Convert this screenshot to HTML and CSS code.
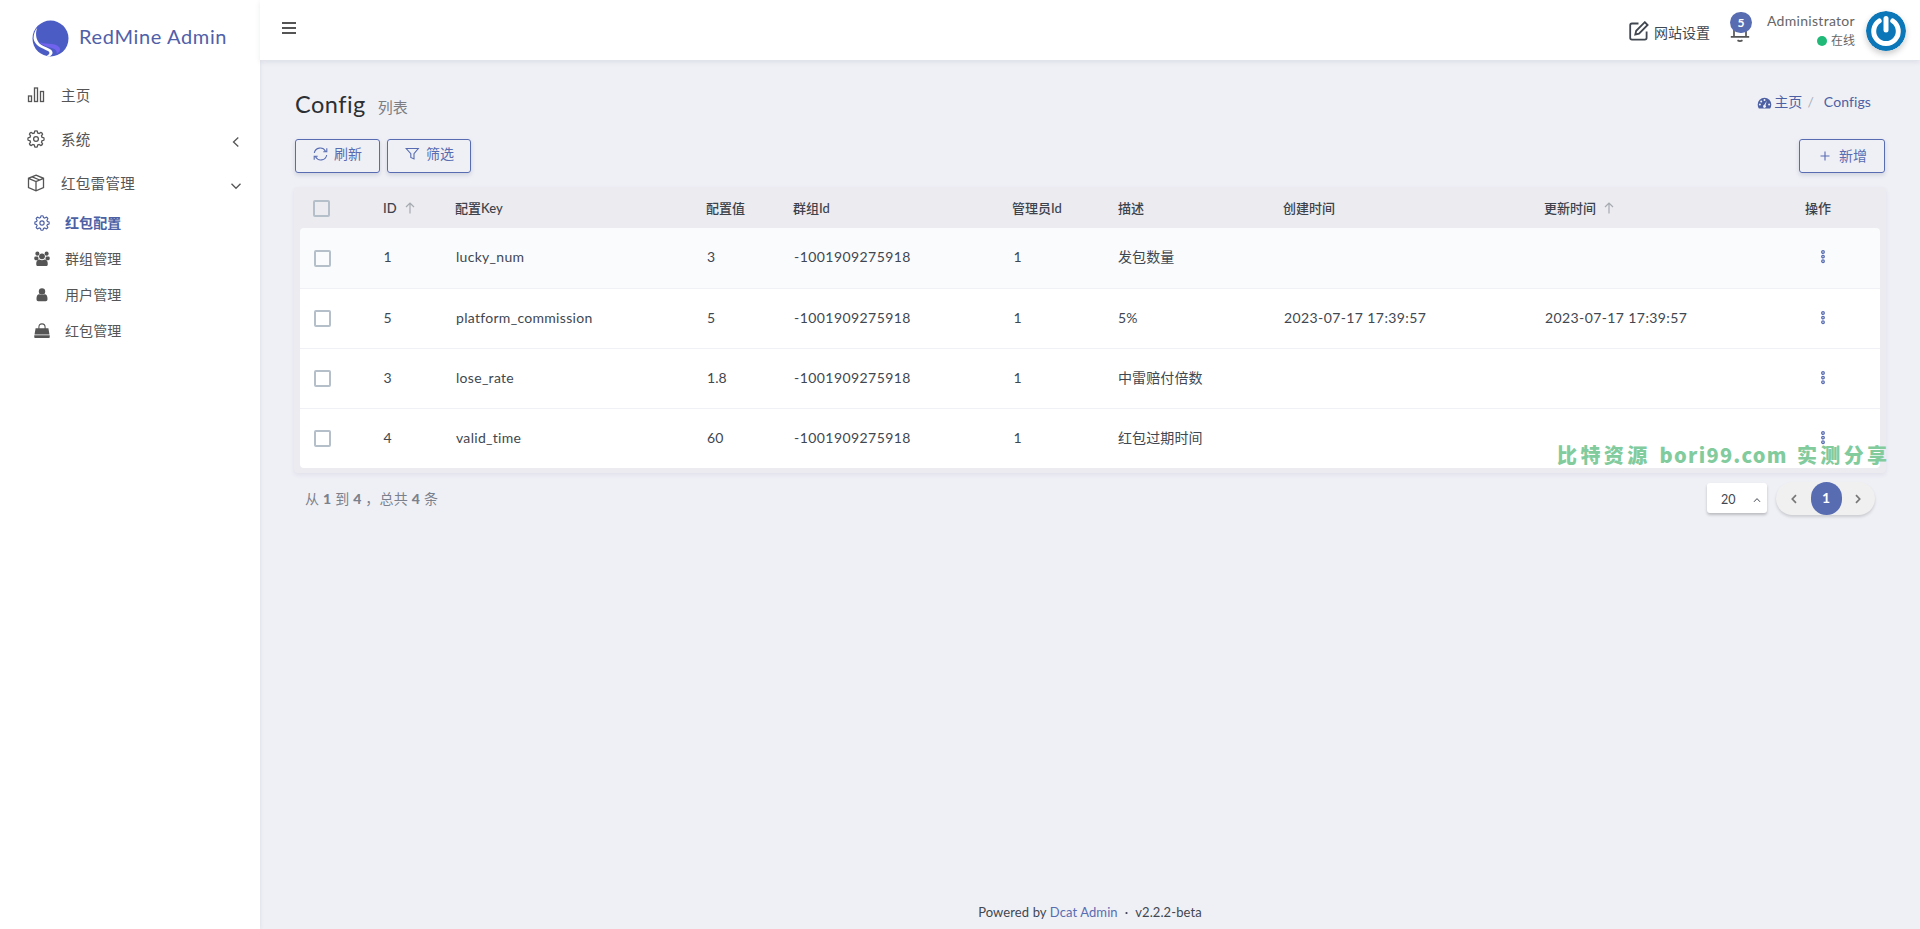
FILE: index.html
```html
<!DOCTYPE html>
<html lang="zh-CN">
<head>
<meta charset="utf-8">
<title>RedMine Admin</title>
<link rel="stylesheet" href="styles.css">
</head>
<body>
<svg class="defs" width="0" height="0" aria-hidden="true">
  <symbol id="gear" viewBox="0 0 24 24"><path d="M9.8 3.9 10.3 1.6Q12 .8 13.7 1.6L14.2 3.9 16.2 4.7 18.4 3.2Q20.2 3.8 20.8 5.6L19.3 7.8 20.1 9.8 22.4 10.3Q23.2 12 22.4 13.7L20.1 14.2 19.3 16.2 20.8 18.4Q20.2 20.2 18.4 20.8L16.2 19.3 14.2 20.1 13.7 22.4Q12 23.2 10.3 22.4L9.8 20.1 7.8 19.3 5.6 20.8Q3.8 20.2 3.2 18.4L4.7 16.2 3.9 14.2 1.6 13.7Q.8 12 1.6 10.3L3.9 9.8 4.7 7.8 3.2 5.6Q3.8 3.8 5.6 3.2L7.8 4.7Z"/><circle cx="12" cy="12" r="3.2"/></symbol>
  <symbol id="dots" viewBox="0 0 6 16"><circle cx="3" cy="3" r="1.300"/><circle cx="3" cy="7.600" r="1.300"/><circle cx="3" cy="12.200" r="1.300"/></symbol>
  <symbol id="up" viewBox="0 0 10 12"><path d="M5 11.5V1.2M1 5 5 1l4 4"/></symbol>
</svg>
<div class="app">
  <aside class="sidebar">
    <a class="brand">
      <svg class="logo" viewBox="0 0 36 36"><circle cx="18" cy="18" r="17.5" fill="#4b5cc4"/><path d="M5.2 7.500C3.200 12 3.500 18 7 22.500c4.500 4.500 13.500 4.500 13 9.700-.2 1.500-1.500 2.700-2.700 3.200-1.500 0-2.500-.5-3-.8 2.700-1 3.700-3 1.200-4.500C10 27.500 2.500 25 1.500 18 1.500 13.500 3 10 5.200 7.500Z" fill="#fff"/><path d="M6 21c5 3.500 16 .5 20.500 5.500 2 3 0 5-2.500 6.300.5-3-1.500-4.800-5.500-5.800-5-1.300-9-2.500-12.500-6Z" fill="#7163ee"/></svg>
      <span>RedMine Admin</span>
    </a>
    <nav class="menu">
      <a class="item"><svg class="ic" viewBox="0 0 18 18"><rect x="1.500" y="10" width="3" height="5.500"/><rect x="7.500" y="2" width="3" height="13.500"/><rect x="13.500" y="5.500" width="3" height="10"/></svg><span>主页</span></a>
      <a class="item"><svg class="ic gear"><use href="#gear"/></svg><span>系统</span><svg class="arrow left" viewBox="0 0 10 10"><path d="M7.300 .5 2.500 5l4.800 4.500"/></svg></a>
      <a class="item"><svg class="ic" viewBox="0 0 18 18"><path d="M9 1.200 16.500 4.300V13.500L9 16.800 1.500 13.500V4.300ZM1.500 4.300 9 7.600 16.500 4.300M9 7.600V16.800M5.200 2.800 12.700 6"/></svg><span>红包雷管理</span><svg class="arrow" viewBox="0 0 10 10"><path d="M.5 2.800 5 7.300 9.500 2.800"/></svg></a>
      <div class="submenu">
        <a class="sub active"><svg class="ic gear"><use href="#gear"/></svg><span>红包配置</span></a>
        <a class="sub"><svg class="ic solid" viewBox="0 0 18 18"><circle cx="3.800" cy="3" r="2.300"/><circle cx="14.200" cy="3" r="2.300"/><rect x=".3" y="6.300" width="4.700" height="4" rx="1.500"/><rect x="13" y="6.300" width="4.700" height="4" rx="1.500"/><circle cx="9" cy="6" r="3.300"/><path d="M2.500 14.500c0-3 1.200-4.800 3.500-4.800q3 1.400 6 0c2.300 0 3.500 1.800 3.500 4.800 0 1.800-.8 2.500-2.200 2.500H4.700c-1.400 0-2.200-.7-2.200-2.500Z"/></svg><span>群组管理</span></a>
        <a class="sub"><svg class="ic solid" viewBox="0 0 18 18"><circle cx="9" cy="5" r="3.600"/><path d="M2.800 13.500c0-3 1-5.300 3.200-5.300q3 1.800 6 0c2.200 0 3.200 2.300 3.200 5.300 0 1.800-.8 2.500-2 2.500H4.800c-1.200 0-2-.7-2-2.500Z"/></svg><span>用户管理</span></a>
        <a class="sub"><svg class="ic solid" viewBox="0 0 18 18"><path d="M1.800 5.800h14.400l1.200 7.200H.6ZM.3 13.900h17.400v2q0 .9-.9.900H1.200q-.9 0-.9-.9Z"/><path class="line" d="M5.500 8V4.900q0-3.900 3.500-3.900t3.500 3.900V8"/></svg><span>红包管理</span></a>
      </div>
    </nav>
  </aside>
  <div class="main">
    <header class="topbar">
      <svg class="burger" viewBox="0 0 16 12"><path d="M1 1h14M1 6h14M1 11h14"/></svg>
      <div class="tools">
        <a class="setting"><svg viewBox="0 0 20 20"><path d="M9.500 2.500H3Q1.200 2.500 1.200 4.300V16.800Q1.200 18.600 3 18.600H15.800Q17.600 18.600 17.600 16.800V10.500M15.800 1.200 18.600 4 10 12.600 6.300 13.600 7.200 9.800Z"/></svg><span>网站设置</span></a>
        <a class="bell"><svg viewBox="0 0 20 22"><path d="M4 17V8q0-6 6-6t6 6v9M.8 16.800H19.200M7.500 20.200Q10 22 12.500 20.200"/></svg><b>5</b></a>
        <div class="user"><span class="name">Administrator</span><span class="status"><i></i>在线</span></div>
        <svg class="avatar" viewBox="0 0 40 40"><circle cx="20" cy="20" r="20" fill="#0b76b8"/><path d="M13.200 10A12.300 12.300 0 1 0 26.800 10" fill="none" stroke="#fff" stroke-width="5" stroke-linecap="round"/><path d="M20 7.500v11.500" stroke="#fff" stroke-width="5" stroke-linecap="round"/></svg>
      </div>
    </header>
    <section class="content">
      <div class="heading">
        <h1>Config<small>列表</small></h1>
        <div class="crumbs"><svg viewBox="0 0 14 12"><path d="M7 .8A6.800 6.800 0 0 0 .2 7.600Q.2 10 1.400 11.500H12.600Q13.800 10 13.800 7.600A6.800 6.800 0 0 0 7 .8Z"/><g fill="#eff0f6"><circle cx="7" cy="3" r="1"/><circle cx="3.700" cy="4.400" r="1"/><circle cx="2.400" cy="7.600" r="1"/><circle cx="11.600" cy="7.600" r="1"/><path d="M9.300 3.700 8 8.200a1.500 1.500 0 1 1-1.400-.3Z"/></g></svg><span>主页</span><i>/</i><span class="last">Configs</span></div>
      </div>
      <div class="actions">
        <a class="btn refresh"><svg viewBox="0 0 15 14"><path d="M1.300 6A6 6 0 0 1 12.500 4.200M13.700 8A6 6 0 0 1 2.500 9.800M13.800 1.200V4.700H10.300M1.200 12.800V9.300H4.700"/></svg>刷新</a>
        <a class="btn filter"><svg viewBox="0 0 15 14"><path d="M1.200 1.500H13.300L9 6.600V12L5.800 10.500V6.600Z"/></svg>筛选</a>
        <a class="btn add"><svg viewBox="0 0 10 10"><path d="M5 .5v9M.5 5h9"/></svg>新增</a>
      </div>
      <div class="card">
        <table>
          <colgroup><col class="c1"><col class="c2"><col class="c3"><col class="c4"><col class="c5"><col class="c6"><col class="c7"><col class="c8"><col class="c9"><col class="c10"></colgroup>
          <thead><tr><th><i class="check"></i></th><th>ID<svg><use href="#up"/></svg></th><th>配置Key</th><th>配置值</th><th>群组Id</th><th>管理员Id</th><th>描述</th><th>创建时间</th><th>更新时间<svg><use href="#up"/></svg></th><th>操作</th></tr></thead>
          <tbody>
            <tr class="hover"><td><i class="check"></i></td><td>1</td><td>lucky_num</td><td>3</td><td class="num">-1001909275918</td><td>1</td><td>发包数量</td><td></td><td></td><td><svg class="dots"><use href="#dots"/></svg></td></tr>
            <tr><td><i class="check"></i></td><td>5</td><td>platform_commission</td><td>5</td><td class="num">-1001909275918</td><td>1</td><td>5%</td><td class="date">2023-07-17 17:39:57</td><td class="date">2023-07-17 17:39:57</td><td><svg class="dots"><use href="#dots"/></svg></td></tr>
            <tr><td><i class="check"></i></td><td>3</td><td>lose_rate</td><td>1.8</td><td class="num">-1001909275918</td><td>1</td><td>中雷赔付倍数</td><td></td><td></td><td><svg class="dots"><use href="#dots"/></svg></td></tr>
            <tr><td><i class="check"></i></td><td>4</td><td>valid_time</td><td>60</td><td class="num">-1001909275918</td><td>1</td><td>红包过期时间</td><td></td><td></td><td><svg class="dots"><use href="#dots"/></svg></td></tr>
          </tbody>
        </table>
        <div class="watermark"><span>比特资源</span><span class="site">bori99.com</span><span>实测分享</span></div>
      </div>
      <div class="pager">
        <div class="total">从 <b>1</b> 到 <b>4</b> ，总共 <b>4</b> 条</div>
        <div class="size"><span>20</span><svg viewBox="0 0 8 6"><path d="M1 4.800 4 1.600 7 4.800"/></svg></div>
        <div class="pages"><svg viewBox="0 0 6 10"><path d="M5 1.200 1.300 5 5 8.800"/></svg><b>1</b><svg viewBox="0 0 6 10"><path d="M1 1.200 4.700 5 1 8.800"/></svg></div>
      </div>
    </section>
    <footer>Powered by <a>Dcat Admin</a><span class="sep">·</span>v2.2.2-beta</footer>
  </div>
</div>
</body>
</html>
```
FILE: styles.css
```css
* { box-sizing: border-box; }
body { margin: 0; background: #eff0f6; color: #414750; font: 14px/20px Lato, "Noto Sans CJK SC", sans-serif; }
svg { fill: none; stroke: currentColor; flex: none; display: block; }
i { font-style: normal; }
.defs { position: absolute; }
.app { display: flex; height: 929px; overflow: hidden; }

.sidebar { width: 260px; background: #fff; box-shadow: 0 0 4px rgba(60, 70, 100, .12); color: #555; }
.brand { display: flex; align-items: center; height: 77px; padding-left: 32px; gap: 10px; color: #5060a8; font-size: 20px; letter-spacing: .64px; }
.brand span { padding-bottom: 5px; }
.logo { width: 37px; height: 37px; stroke: none; }
.item { display: flex; align-items: center; height: 44px; padding: 0 19px 0 27px; font-size: 14.5px; }
.menu { margin-top: -4px; }
.ic { width: 18px; height: 18px; stroke-width: 1.3; }
.gear { stroke-width: 1.7; }
.item span { padding: 2px 0 0 16px; letter-spacing: .3px; flex: 1; }
.arrow { width: 10px; height: 10px; margin-top: 5px; stroke-width: 1.3; }
.sub { display: flex; align-items: center; height: 36px; padding-left: 34px; font-size: 14px; }
.sub .ic { width: 16px; height: 16px; }
.sub span { padding-left: 15px; letter-spacing: .1px; }
.sub.active { color: #4c60a3; font-weight: bold; }
.solid { fill: currentColor; stroke: none; }
.solid .line { fill: none; stroke: currentColor; stroke-width: 1.2; }

.main { flex: 1; display: flex; flex-direction: column; }
.topbar { height: 60px; background: #fff; box-shadow: 0 2px 5px rgba(60, 70, 100, .1); display: flex; align-items: flex-start; padding-left: 21px; }
.burger { width: 16px; height: 12px; margin-top: 22px; stroke-width: 2; color: #555; }
.tools { margin-left: auto; display: flex; }
.setting { display: flex; gap: 5px; padding-top: 21px; color: #414750; }
.setting svg { width: 20px; height: 20px; stroke-width: 1.8; }
.setting span { padding-top: 2px; }
.bell { position: relative; margin: 20px 0 0 20px; width: 20px; }
.bell svg { width: 20px; height: 22px; color: #555; stroke-width: 1.7; }
.bell b { position: absolute; left: 0; top: -8px; width: 22px; height: 21px; border-radius: 11px; background: #586cb1; color: #fff; text-align: center; font-size: 12px; line-height: 21px; }
.user { display: flex; flex-direction: column; align-items: flex-end; width: 105px; padding-top: 11px; color: #666; }
.name { font-size: 14px; letter-spacing: .3px; }
.status { display: flex; align-items: center; gap: 4px; font-size: 12px; line-height: 19px; }
.status i { width: 10px; height: 10px; border-radius: 5px; background: #21b978; }
.avatar { width: 40px; height: 40px; margin: 11px 14px 0 11px; stroke: none; border-radius: 50%; box-shadow: 0 3px 6px rgba(0, 0, 0, .2); }

.content { flex: 1; padding: 29px 34px 0 34px; }
.heading { display: flex; height: 50px; padding-left: 1px; justify-content: space-between; }
h1 { margin: 0; font-size: 23.5px; line-height: 30px; font-weight: 400; color: #2c2f33; letter-spacing: .5px; }
small { font-size: 15px; margin-left: 12px; color: #7b7d82; letter-spacing: 0; }
.crumbs { display: flex; color: #4c60a3; padding-right: 15px; padding-top: 3px; letter-spacing: .1px; }
.crumbs svg { width: 15px; height: 12px; margin: 5px 2px 0 0; fill: #4c60a3; stroke: none; }
.crumbs i { color: #aab0bb; margin: 0 10px 0 5px; }
.actions { display: flex; gap: 7px; padding-left: 1px; }
.btn { height: 34px; display: flex; align-items: center; border: 1px solid #586cb1; border-radius: 3px; color: #586cb1; box-shadow: 0 2px 4px rgba(60, 70, 110, .18); padding-left: 17px; }
.btn svg { width: 15px; height: 14px; margin-right: 6px; stroke-width: 1.1; }
.refresh { width: 85px; padding-bottom: 4px; }
.filter { width: 84px; padding-bottom: 4px; }
.add { width: 86px; margin: 0 1px 0 auto; padding-left: 20px; }
.add svg { width: 10px; height: 10px; margin-right: 9px; }

.card { position: relative; margin-top: 14px; height: 286px; background: #ebebf0; border-radius: 4px; padding: 0 6px; box-shadow: 0 2px 4px rgba(60, 70, 100, .08); }
table { width: 100%; table-layout: fixed; border-collapse: separate; border-spacing: 0; }
.c1 { width: 67px; } .c2 { width: 73px; } .c3 { width: 251px; } .c4 { width: 87px; } .c5 { width: 219px; }
.c6 { width: 106px; } .c7 { width: 165px; } .c8 { width: 261px; } .c9 { width: 261px; }
th, td { text-align: left; white-space: nowrap; padding: 0 0 0 16px; }
th { height: 41px; font-size: 13px; font-weight: 500; padding-left: 15px; color: #3d424b; }
th svg { display: inline-block; width: 10px; height: 12px; margin-left: 8px; vertical-align: -1px; color: #a5abb1; stroke-width: 1.2; }
td { height: 60px; background: #fff; border-top: 1px solid #f0f1f6; padding-bottom: 2px; letter-spacing: .1px; }
td:nth-child(3) { letter-spacing: .3px; }
td:nth-child(7) { padding-left: 15px; }
td.num { letter-spacing: .44px; }
td.date { letter-spacing: .4px; }
.hover td { background: #fafbfd; border-top: 0; }
.hover td:first-child { border-top-left-radius: 4px; }
.hover td:last-child { border-top-right-radius: 4px; }
tr:last-child td:first-child { border-bottom-left-radius: 4px; }
tr:last-child td:last-child { border-bottom-right-radius: 4px; }
th:nth-child(2) { padding-left: 16px; }
td:nth-child(2), td:nth-child(6) { padding-left: 16.5px; }
.check { display: block; width: 17px; height: 17px; border: 2px solid #b4bfca; border-radius: 2px; }
th:first-child, td:first-child { padding-left: 14px; }
th:first-child { padding: 2px 0 0 13px; }
td .check { margin-top: 2px; }
.dots { width: 6px; height: 16px; fill: none; stroke: #586cb1; stroke-width: 1.3; margin-left: 14px; }
.watermark { position: absolute; left: 1263px; top: 256px; display: flex; gap: 9px; font: 900 20px/24px "Noto Sans CJK SC", sans-serif; color: #82cb9d; white-space: nowrap; letter-spacing: 3.4px; }
.site { letter-spacing: 1.3px; }

.pager { display: flex; padding: 9px 11px 0 11px; }
.total { flex: 1; padding-top: 7px; color: #7b818c; letter-spacing: .22px; }
.total b { font-weight: 900; }
.size { width: 60px; height: 30px; margin-top: 1px; background: #fff; border-radius: 3px; box-shadow: 0 2px 3px rgba(0, 0, 0, .22); display: flex; justify-content: space-between; align-items: center; padding: 4px 6px 0 14px; font-size: 12.5px; }
.size svg { width: 8px; height: 6px; }
.pages { width: 99px; height: 33px; margin-left: 9px; border-radius: 17px; background: #f0f0f0; box-shadow: 0 2px 3px rgba(0, 0, 0, .15); display: flex; justify-content: space-between; align-items: center; padding: 0 14px 0 15px; }
.pages svg { width: 6px; height: 10px; stroke-width: 1.7; color: #777; }
.pages b { width: 31px; height: 33px; border-radius: 16px; background: #586cb1; color: #fff; text-align: center; line-height: 31px; }
footer { height: 27px; text-align: center; font-size: 13px; letter-spacing: .1px; }
footer a { color: #586cb1; }
.sep { margin: 0 7px; }
```
